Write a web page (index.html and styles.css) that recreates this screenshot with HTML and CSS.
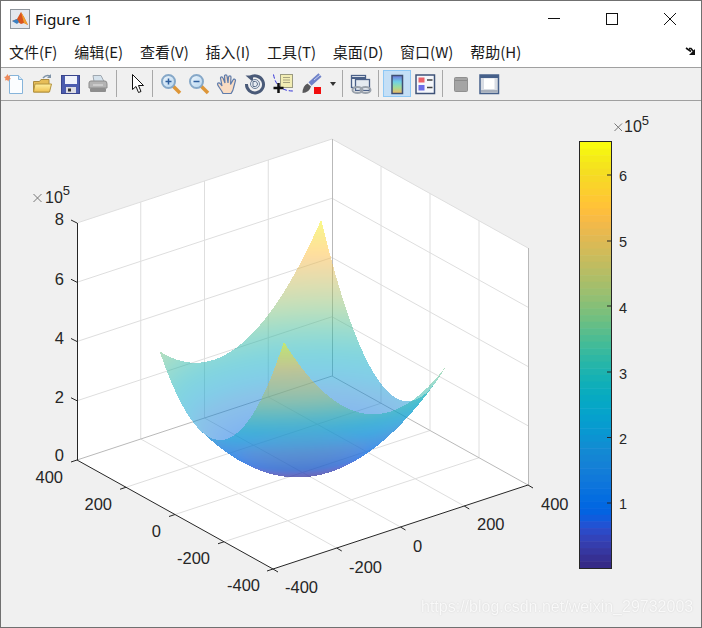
FILE: index.html
```html
<!DOCTYPE html>
<html lang="zh">
<head>
<meta charset="utf-8">
<title>Figure 1</title>
<link rel="stylesheet" href="styles.css">
</head>
<body>
<div class="window">
  <header class="titlebar">
    <svg class="app-icon" width="20" height="20" viewBox="0 0 20 20">
      <rect x="0.5" y="0.5" width="19" height="19" fill="#e4e8ee" stroke="#8f959c"/>
      <path d="M2 12l5-2 4-7 3 5 4 8-4-2-3 1-3-2z" fill="#d9541e"/>
      <path d="M2 12l5-2 2 3-2 2z" fill="#3a7fc0"/>
      <path d="M11 3l3 5 4 8-4-2z" fill="#f0a030"/>
    </svg>
    <span class="title-text">Figure 1</span>
    <div class="window-controls">
      <span class="control"><svg width="14" height="14" viewBox="0 0 14 14"><path d="M1 6.500h12" stroke="#111" fill="none"/></svg></span>
      <span class="control"><svg width="14" height="14" viewBox="0 0 14 14"><rect x="1.500" y="1.500" width="11" height="11" fill="none" stroke="#111"/></svg></span>
      <span class="control"><svg width="14" height="14" viewBox="0 0 14 14"><path d="M1 1l12 12M13 1L1 13" stroke="#111" fill="none"/></svg></span>
    </div>
  </header>

  <nav class="menubar">
    <span>文件(F)</span><span>编辑(E)</span><span>查看(V)</span><span>插入(I)</span><span>工具(T)</span><span>桌面(D)</span><span>窗口(W)</span><span>帮助(H)</span>
    <svg class="menu-dock" width="11" height="9" viewBox="0 0 11 9"><path d="M1 1l5 3.500M4 1.500h2L9 5" stroke="#111" stroke-width="1.600" fill="none"/><path d="M10 2v6H4z" fill="#111"/></svg>
  </nav>

  <div class="toolbar">
    <svg width="0" height="0" class="defs"><defs>
      <linearGradient id="rainbow" x1="0" y1="0" x2="0" y2="1">
        <stop offset="0" stop-color="#6f74dc"/><stop offset="0.35" stop-color="#6ed0e6"/><stop offset="0.65" stop-color="#9fdc9c"/><stop offset="1" stop-color="#f4b860"/>
      </linearGradient>
      <linearGradient id="folder" x1="0" y1="0" x2="0" y2="1">
        <stop offset="0" stop-color="#fff0a0"/><stop offset="1" stop-color="#eec050"/>
      </linearGradient>
      <linearGradient id="lens" x1="0" y1="0" x2="1" y2="1">
        <stop offset="0" stop-color="#f0f7fd"/><stop offset="1" stop-color="#b4d4ee"/>
      </linearGradient>
    </defs></svg>

    <span class="tool"><svg width="22" height="22" viewBox="0 0 22 22">
      <path d="M6.500 2.500h9l4 4v14h-13z" fill="#fbfdff" stroke="#86b4da"/><path d="M15.500 2.500v4h4" fill="#d6e8f6" stroke="#86b4da"/>
      <path d="M4.500 1l1 2 2-.5-1 2 1.500 1.500-2 .5-.5 2-1.500-1.500-2 .5.500-2L1 4l2-.5z" fill="#ee8a5a"/>
    </svg></span>
    <span class="tool"><svg width="22" height="22" viewBox="0 0 22 22">
      <path d="M2.500 19V8.500h6l1.500-2h8V19z" fill="#e6bd58" stroke="#a98a40"/>
      <path d="M2.500 19l1.500-8h16.500l-2 8z" fill="url(#folder)" stroke="#b4933f"/>
      <path d="M12 5q3-3.500 7-2" fill="none" stroke="#7f93a8" stroke-width="1.500"/><path d="M20 1v4h-4z" fill="#7f93a8"/>
    </svg></span>
    <span class="tool"><svg width="22" height="22" viewBox="0 0 22 22">
      <rect x="2.500" y="2.500" width="18" height="18" fill="#4c5cae" stroke="#39458c"/>
      <rect x="6" y="3" width="12" height="8" fill="#f0f3fb"/>
      <rect x="7" y="14" width="10" height="6" fill="#dcdce4"/><rect x="9" y="15.500" width="3" height="3" fill="#333"/>
    </svg></span>
    <span class="tool"><svg width="22" height="22" viewBox="0 0 22 22">
      <path d="M6 2.500h8l3 6H7z" fill="#d5e2ec" stroke="#a0a8b0"/>
      <path d="M2 10q0-2 2-2h14q2 0 2 3v4H2z" fill="#b4b4b4" stroke="#8c8c8c"/>
      <rect x="3" y="15" width="16" height="4" rx="1" fill="#8e8e8e"/><path d="M6 12h10" stroke="#e4e4e4"/>
    </svg></span>
    <span class="sep sep-wide"></span>
    <span class="tool"><svg width="22" height="22" viewBox="0 0 22 22">
      <path d="M6.500 1.500v15l3.500-3 2.500 6 2.500-1-2.500-6h5z" fill="#fff" stroke="#111"/>
    </svg></span>
    <span class="sep sep-tight"></span>
    <span class="tool"><svg width="22" height="22" viewBox="0 0 22 22">
      <path d="M13 13l7 7" stroke="#dd9638" stroke-width="3.500"/>
      <circle cx="8.500" cy="8.500" r="6.500" fill="url(#lens)" stroke="#86a8c8" stroke-width="2"/>
      <path d="M5.500 8.500h6M8.500 5.500v6" stroke="#2f5f9e" stroke-width="1.500"/>
    </svg></span>
    <span class="tool"><svg width="22" height="22" viewBox="0 0 22 22">
      <path d="M13 13l7 7" stroke="#dd9638" stroke-width="3.500"/>
      <circle cx="8.500" cy="8.500" r="6.500" fill="url(#lens)" stroke="#86a8c8" stroke-width="2"/>
      <path d="M5.500 8.500h6" stroke="#2f5f9e" stroke-width="1.500"/>
    </svg></span>
    <span class="tool"><svg width="22" height="22" viewBox="0 0 22 22">
      <path d="M7 20.500C5 16 1.500 13 1.500 11c0-1.500 2-1.500 3 0l1.500 2-1.500-8c0-1.500 2-1.500 2.500 0L9 10 8.500 3c0-1.500 2.500-1.500 2.500 0l1 7 .5-6c.300-1.500 2.500-1.500 2.500 0l-.5 7.500L17 7c.500-1.500 2.500-1 2.500.500L17.500 15c-.5 3-1.500 4-2.500 5.500z" fill="#fadcc2" stroke="#5f7cab" stroke-width="1.200"/>
    </svg></span>
    <span class="tool"><svg width="22" height="22" viewBox="0 0 22 22">
      <path d="M6 4.500A8.500 8.500 0 1 1 2.500 11" fill="none" stroke="#4a5a78" stroke-width="3"/>
      <path d="M1.500 2.500h7.500v6.500z" fill="#4a5a78"/>
      <circle cx="11" cy="11" r="4.500" fill="#e8edf3" stroke="#6f8099"/><path d="M9 8.500h2.500q2 .5 2 2.500t-2 2.500H9z" fill="none" stroke="#5f708a"/>
    </svg></span>
    <span class="tool"><svg width="22" height="22" viewBox="0 0 22 22">
      <path d="M1.500 1.500Q3 10 8 14t13 4" fill="none" stroke="#3232d8" stroke-dasharray="4 2"/>
      <rect x="8.500" y="1.500" width="12" height="13" fill="#f2edb4" stroke="#9a9a80"/>
      <path d="M11 4.500h7M11 7h7M11 9.500h7" stroke="#a8a480"/>
      <path d="M6.500 10v10M1.500 15h10" stroke="#111" stroke-width="2.500"/>
    </svg></span>
    <span class="tool"><svg width="22" height="22" viewBox="0 0 22 22">
      <path d="M20 2L10 11" stroke="#6f82c8" stroke-width="4.500"/><path d="M20 2l-6 5" stroke="#c8d2f0" stroke-width="1"/>
      <path d="M2.500 20q0-7 5-9.500l3.500 3q-2 6.500-8.500 6.500z" fill="#58585a"/>
      <rect x="14" y="14" width="7" height="7" fill="#f10d0d"/>
    </svg></span>
    <span class="tool-arrow"><svg width="6" height="4" viewBox="0 0 6 4"><path d="M0 0h6L3 4z" fill="#333"/></svg></span>
    <span class="sep sep-tight"></span>
    <span class="tool"><svg width="22" height="22" viewBox="0 0 22 22">
      <rect x="1.500" y="2.500" width="14" height="12" fill="#eef2f7" stroke="#4a6088" stroke-width="1.300"/><path d="M1.500 5h14" stroke="#4a6088" stroke-width="2"/>
      <rect x="5.500" y="6.500" width="14" height="11" fill="#e4eaf1" stroke="#4a6088" stroke-width="1.300"/>
      <ellipse cx="7.500" cy="17" rx="5" ry="3" fill="none" stroke="#9aa2ac" stroke-width="2"/><ellipse cx="15.500" cy="17" rx="5" ry="3" fill="none" stroke="#9aa2ac" stroke-width="2"/>
    </svg></span>
    <span class="sep"></span>
    <span class="tool tool-active"><svg width="22" height="22" viewBox="0 0 22 22">
      <rect x="6" y="2.500" width="10.500" height="18" fill="url(#rainbow)" stroke="#3f4f72" stroke-width="1.500"/>
    </svg></span>
    <span class="tool"><svg width="22" height="22" viewBox="0 0 22 22">
      <rect x="2" y="2" width="18.500" height="18.500" fill="#f5f7fb" stroke="#3f5378" stroke-width="1.500"/>
      <rect x="4.500" y="4.500" width="6" height="5" fill="#ec6068"/><rect x="4.500" y="12" width="6" height="5.500" fill="#6c6ce8"/>
      <path d="M13 7h5.500M13 14.500h5.500" stroke="#444" stroke-width="1.500"/>
    </svg></span>
    <span class="sep"></span>
    <span class="tool"><svg width="22" height="22" viewBox="0 0 22 22">
      <rect x="4.500" y="4.500" width="13" height="14" rx="1" fill="#a4a4a4" stroke="#909090"/><path d="M5 7.500h12" stroke="#8a8a8a"/>
    </svg></span>
    <span class="tool"><svg width="22" height="22" viewBox="0 0 22 22">
      <rect x="2" y="2" width="18.500" height="18.500" fill="#d9dde4" stroke="#46608a" stroke-width="1.500"/>
      <path d="M2 3.500h18.500" stroke="#46608a" stroke-width="3"/>
      <rect x="6" y="5.500" width="10.500" height="10.500" fill="#fff"/><rect x="3" y="17" width="17" height="2.500" fill="#a8b0bc"/>
    </svg></span>
  </div>

  <main class="figure">
    <svg class="plot" width="700" height="526" viewBox="1 101 700 526">
      <path class="wall" d="M77 223L332 139L528 248V485L273 569L77 460Z"/>
      <path class="grid" d="M336.750 548L140.750 439M400.500 527L204.500 418M464.250 506L268.250 397
        M224 541.750L479 457.750M175 514.500L430 430.500M126 487.250L381 403.250
        M140.750 439V202M204.500 418V181M268.250 397V160
        M77 400.750L332 316.750M77 341.500L332 257.500M77 282.250L332 198.250
        M479 457.750V220.750M430 430.500V193.500M381 403.250V166.250
        M528 425.750L332 316.750M528 366.500L332 257.500M528 307.250L332 198.250
        M77 223L332 139L528 248"/>
      <path class="edge" d="M332.500 139V376M77 460L332 376L528 485M528.500 248V485"/>
      <path class="axis" d="M77.500 223V460M77 460L273 569L528 485"/>
      <path class="axis" d="M77 223l-6-3M77 341.500l-6-3M77 282.250l-6-3M77 400.750l-6-3M77 460l-6 2
        M126 487.250l-6 2M175 514.500l-6 2M224 541.750l-6 2M273 569l-6 2
        M273 569l5 3M336.750 548l5 3M400.500 527l5 3M464.250 506l5 3M528 485l5 3"/>

      <g class="tick-label end">
        <text x="64" y="225">8</text><text x="64" y="285">6</text><text x="64" y="344">4</text><text x="64" y="403">2</text><text x="64" y="461">0</text>
        <text x="63" y="483">400</text><text x="112" y="510">200</text><text x="161" y="537">0</text><text x="210" y="564">-200</text><text x="260" y="591">-400</text>
      </g>
      <g class="tick-label">
        <text x="285" y="593">-400</text><text x="349" y="573">-200</text><text x="413" y="552">0</text><text x="477" y="530">200</text><text x="541" y="510">400</text>
      </g>
      <path class="times-mark" d="M33.500 194l8 8M41.500 194l-8 8"/>
      <text class="exponent" x="45" y="203">10<tspan class="sup" dy="-8">5</tspan></text>

      <g id="colorbar-bands"></g>
      <rect class="bar-frame" x="579.500" y="141.500" width="32" height="427"/>
      <path class="axis" d="M607 175h4M607 241h4M607 306h4M607 372h4M607 437.500h4M607 503h4"/>
      <g class="bar-label">
        <text x="619" y="181">6</text><text x="619" y="247">5</text><text x="619" y="313">4</text><text x="619" y="379">3</text><text x="619" y="444">2</text><text x="619" y="509">1</text>
      </g>
      <path class="times-mark" d="M614.500 123.500l7.500 7.500M622 123.500l-7.500 7.500"/>
      <text class="exponent" x="624" y="132">10<tspan class="sup" dy="-7">5</tspan></text>
    </svg>
    <canvas id="surface" class="surface" width="700" height="526"></canvas>
    <div class="watermark">https://blog.csdn.net/weixin_29732003</div>
  </main>
</div>
<script src="plot.js"></script>
</body>
</html>
```

FILE: styles.css
```css
* { box-sizing: border-box; }

html, body {
  margin: 0;
  padding: 0;
  background: #f0f0f0;
}

.window {
  width: 702px;
  height: 628px;
  border: 1px solid #707070;
  display: flex;
  flex-direction: column;
  overflow: hidden;
  font-family: "Noto Sans", "Noto Sans CJK SC", sans-serif;
  color: #111;
}

.titlebar {
  height: 37px;
  background: #fff;
  display: flex;
  align-items: center;
  padding: 0 2px 1px 9px;
  flex: none;
}

.app-icon { flex: none; }

.title-text {
  margin-left: 5px;
  font-size: 15.300px;
  color: #111;
}

.window-controls {
  margin-left: auto;
  display: flex;
}

.control {
  width: 58px;
  height: 36px;
  display: flex;
  align-items: center;
  justify-content: center;
}

.menubar {
  height: 30px;
  background: #fff;
  border-bottom: 1px solid #a0a0a0;
  display: flex;
  align-items: center;
  gap: 16.800px;
  padding: 0 5px 2px 8px;
  font-family: "Noto Sans CJK SC", sans-serif;
  font-size: 15px;
  color: #1a1a1a;
  flex: none;
}

.menu-dock { margin-left: auto; flex: none; }

.toolbar {
  height: 33px;
  background: #f0f0f0;
  border-bottom: 1px solid #a0a0a0;
  display: flex;
  align-items: center;
  padding: 0 0 1px 0;
  margin-left: -1px;
  flex: none;
}

.defs { position: absolute; }

.tool {
  width: 28px;
  height: 27px;
  display: flex;
  align-items: center;
  justify-content: center;
  flex: none;
}

.tool-active {
  background: #c4dff6;
  border: 1px solid #8ec8f5;
}

.tool-arrow {
  width: 16px;
  display: flex;
  align-items: center;
  justify-content: center;
  flex: none;
}

.sep {
  width: 1px;
  height: 27px;
  background: #a8a8a8;
  margin: 0 4px 0 3px;
  flex: none;
}

.sep-wide { margin: 0 6px 0 4px; }
.sep-tight { margin: 0 4px 0 1px; }

.figure {
  position: relative;
  flex: 1;
  background: #f0f0f0;
}

.plot { display: block; }

.surface {
  position: absolute;
  left: 0;
  top: 0;
}

.wall { fill: #fff; stroke: none; }
.grid { fill: none; stroke: #dedede; stroke-width: 1; }
.edge { fill: none; stroke: #b9b9b9; stroke-width: 1; }
.axis { fill: none; stroke: #262626; stroke-width: 1; }
.times-mark { fill: none; stroke: #777; stroke-width: 1; }

.tick-label text,
.bar-label text,
.exponent {
  font-family: "Liberation Sans", sans-serif;
  fill: #262626;
}

.tick-label { font-size: 16.500px; }
.tick-label.end { text-anchor: end; }
.bar-label { font-size: 14.500px; }

.exponent { font-size: 16px; }
.sup { font-size: 13px; }

.bar-frame { fill: none; stroke: #262626; stroke-width: 1; }

.watermark {
  position: absolute;
  left: 420px;
  top: 497px;
  font-family: "Liberation Sans", sans-serif;
  font-size: 16px;
  color: #f9f9f9;
  text-shadow: 0 0 1.500px #cccccc;
  white-space: nowrap;
}
```

FILE: plot.js
```js
var PARULA = [
  [.2081,.1663,.5292],[.2116,.1898,.5777],[.2123,.2138,.6270],[.2081,.2386,.6771],
  [.1959,.2645,.7279],[.1707,.2919,.7792],[.1253,.3242,.8303],[.0591,.3598,.8683],
  [.0117,.3875,.8820],[.0060,.4086,.8828],[.0165,.4266,.8786],[.0329,.4430,.8720],
  [.0498,.4586,.8641],[.0629,.4737,.8554],[.0723,.4887,.8467],[.0779,.5040,.8384],
  [.0793,.5200,.8312],[.0749,.5375,.8263],[.0641,.5570,.8240],[.0488,.5772,.8228],
  [.0343,.5966,.8199],[.0265,.6137,.8135],[.0239,.6287,.8038],[.0231,.6418,.7913],
  [.0228,.6535,.7768],[.0267,.6642,.7607],[.0384,.6743,.7436],[.0590,.6838,.7254],
  [.0843,.6928,.7062],[.1133,.7015,.6859],[.1453,.7098,.6646],[.1801,.7177,.6424],
  [.2178,.7250,.6193],[.2586,.7317,.5954],[.3022,.7376,.5712],[.3482,.7424,.5473],
  [.3953,.7459,.5244],[.4420,.7481,.5033],[.4871,.7491,.4840],[.5300,.7491,.4661],
  [.5709,.7485,.4494],[.6099,.7473,.4337],[.6473,.7456,.4188],[.6834,.7435,.4044],
  [.7184,.7411,.3905],[.7525,.7384,.3768],[.7858,.7356,.3633],[.8185,.7327,.3498],
  [.8507,.7299,.3360],[.8824,.7274,.3217],[.9139,.7258,.3063],[.9450,.7261,.2886],
  [.9739,.7314,.2666],[.9938,.7455,.2403],[.9990,.7653,.2164],[.9955,.7861,.1967],
  [.9880,.8066,.1794],[.9789,.8271,.1633],[.9697,.8481,.1475],[.9626,.8705,.1309],
  [.9589,.8949,.1132],[.9598,.9218,.0948],[.9661,.9514,.0755],[.9763,.9831,.0538]
];

function colorAt(s) {
  var p = Math.max(0, Math.min(63, s * 63));
  var i = Math.min(62, Math.floor(p)), f = p - i;
  return [0, 1, 2].map(function (c) {
    return 255 * (PARULA[i][c] * (1 - f) + PARULA[i + 1][c] * f);
  });
}

function drawColorbar() {
  var group = document.getElementById('colorbar-bands');
  var top = 142, height = 426;
  for (var i = 0; i < 64; i++) {
    var r = document.createElementNS('http://www.w3.org/2000/svg', 'rect');
    var c = PARULA[63 - i].map(function (v) { return Math.round(v * 255); });
    r.setAttribute('x', 580);
    r.setAttribute('y', top + i * height / 64);
    r.setAttribute('width', 31);
    r.setAttribute('height', height / 64 + 0.5);
    r.setAttribute('fill', 'rgb(' + c.join(',') + ')');
    group.appendChild(r);
  }
}

/* z = a x^2 + c y^2 + b x y on a square domain, seen through an orthographic view;
   every pixel is solved directly, giving up to two sheets to blend. */
function drawSurface() {
  var canvas = document.getElementById('surface');
  var ctx = canvas.getContext('2d');
  var w = canvas.width, h = canvas.height;
  var img = ctx.createImageData(w, h);
  var a = 3.11, c2 = 4.91, b = 2.06, K = 237 / 8e5, R = 253.5, zMax = 6.51e5;
  var ax = 0.31875, ay = 0.245, bx = 0.105, by = 0.13625;
  var dx = ay, dy = ax;
  var A = -K * (a * dx * dx + c2 * dy * dy + b * dx * dy);
  var alpha = 0.5;

  function sheet(x0, t) {
    var x = x0 + dx * t, y = dy * t;
    if (x < -R || x > R || y < -R || y > R) return null;
    return colorAt((a * x * x + c2 * y * y + b * x * y) / zMax);
  }

  for (var py = 0; py < h; py++) {
    var Y = py + 101.5;
    for (var px = 0; px < w; px++) {
      var X = px + 1.5;
      var x0 = (X - 302.5) / ax;
      var B = -bx * dx - by * dy - K * (2 * a * x0 * dx + b * x0 * dy);
      var C = 472.5 - bx * x0 - K * a * x0 * x0 - Y;
      var D = B * B - 4 * A * C;
      if (D < 0) continue;
      var s = Math.sqrt(D);
      var t1 = (-B + s) / (2 * A), t2 = (-B - s) / (2 * A);
      var far = sheet(x0, Math.max(t1, t2));
      var near = sheet(x0, Math.min(t1, t2));
      if (!far && !near) continue;
      var k = (py * w + px) * 4, out;
      if (far && near) {
        out = [0, 1, 2].map(function (c) { return (near[c] * alpha + far[c] * alpha * (1 - alpha)) / (alpha + alpha * (1 - alpha)); });
        img.data[k + 3] = 255 * (alpha + alpha * (1 - alpha));
      } else {
        out = far || near;
        img.data[k + 3] = 255 * alpha;
      }
      img.data[k] = out[0];
      img.data[k + 1] = out[1];
      img.data[k + 2] = out[2];
    }
  }
  ctx.putImageData(img, 0, 0);
}

drawColorbar();
drawSurface();
```
